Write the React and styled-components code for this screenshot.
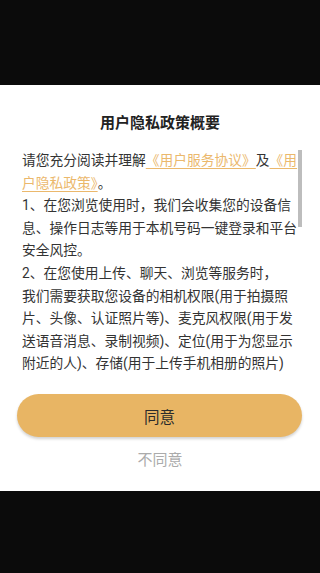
import React from 'react';
import styled, { createGlobalStyle } from 'styled-components';

const GlobalStyle = createGlobalStyle`
    html, body {
        margin: 0;
        padding: 0;
        background: #0b0b0b;
        font-family: Roboto, "Noto Sans CJK SC", sans-serif;
    }
`

const Backdrop = styled.div`
    width: 320px;
    height: 573px;
    padding-top: 85px;
    box-sizing: border-box;
    background: #0b0b0b;
`

const Dialog = styled.div`
    height: 406px;
    background: #fff;
    display: flex;
    flex-direction: column;
    padding-top: 27px;
    box-sizing: border-box;
`

const Title = styled.h1`
    margin: 0;
    font-size: 15px;
    line-height: 22px;
    font-weight: 700;
    color: #222;
    text-align: center;
`

const ScrollArea = styled.div`
    position: relative;
    margin: 15px 18px 0 22px;
    height: 226px;
`

const Content = styled.div`
    height: 100%;
    padding-right: 4px;
    box-sizing: border-box;
    overflow-y: auto;
    scrollbar-width: none;
    font-size: 13.75px;
    line-height: 22.6px;
    color: #333;

    &::-webkit-scrollbar {
        display: none;
    }

    p {
        margin: 0;
    }
`

const Thumb = styled.div`
    position: absolute;
    top: 1px;
    right: 0;
    width: 4px;
    height: ${props => props.size}px;
    background: #bdbdbd;
`

const Link = styled.a`
    color: ${props => props.color};
    text-decoration: underline;
    text-underline-offset: 3px;
    text-decoration-thickness: 1px;
`

const AgreeButton = styled.button`
    margin: 19px 18px 0 17px;
    height: 43px;
    border: none;
    border-radius: 22px;
    background: #e8b564;
    box-shadow: 0 2px 3px rgba(0, 0, 0, 0.18);
    font-family: inherit;
    font-size: 15.5px;
    color: #2b2b2b;
    cursor: pointer;
`

const RejectButton = styled.button`
    margin-top: 12px;
    align-self: center;
    border: none;
    background: transparent;
    padding: 0;
    font-family: inherit;
    font-size: 15px;
    line-height: 22px;
    color: #ababab;
    cursor: pointer;
`

const linkColor = '#ebb86c';

const items = [
    '1、在您浏览使用时，我们会收集您的设备信息、操作日志等用于本机号码一键登录和平台安全风控。',
    '2、在您使用上传、聊天、浏览等服务时，\n我们需要获取您设备的相机权限(用于拍摄照片、头像、认证照片等)、麦克风权限(用于发送语音消息、录制视频)、定位(用于为您显示附近的人)、存储(用于上传手机相册的照片)',
    '等权限，您有权拒绝或取消授权。',
    '3、我们会采取业界领先的安全措施保护您的个人信息，未经您的同意，我们不会从第三方获取、共享或向其提供您的个人信息。',
    '4、您可以查询、更正、删除您的个人信息，也可以撤回授权同意、注销账号、投诉举报以及设置隐私功能。',
    '5、为保障平台的正常运行，我们可能会接入第三方SDK，相关SDK收集信息的类型和目的请查看《第三方信息共享清单》。',
    '6、如您对本政策有任何疑问，可通过应用内的客服或意见反馈与我们联系，我们将在十五个工作日内回复。',
    '点击“同意”即表示您已阅读并同意上述协议及政策的全部内容。'
]

const App = () => {
    return (
        <>
            <GlobalStyle />
            <Backdrop>
                <Dialog>
                    <Title>用户隐私政策概要</Title>
                    <ScrollArea>
                        <Content>
                            <p>
                                请您充分阅读并理解<Link color={linkColor}>《用户服务协议》</Link>及<Link color={linkColor}>《用户隐私政策》</Link>。
                            </p>
                            {items.map(text => (
                                <p key={text}>
                                    {text.split('\n').map((part, i) => (
                                        <React.Fragment key={i}>
                                            {i > 0 && <br />}
                                            {part}
                                        </React.Fragment>
                                    ))}
                                </p>
                            ))}
                        </Content>
                        <Thumb size={77} />
                    </ScrollArea>
                    <AgreeButton>同意</AgreeButton>
                    <RejectButton>不同意</RejectButton>
                </Dialog>
            </Backdrop>
        </>
    )
}

export default App;
